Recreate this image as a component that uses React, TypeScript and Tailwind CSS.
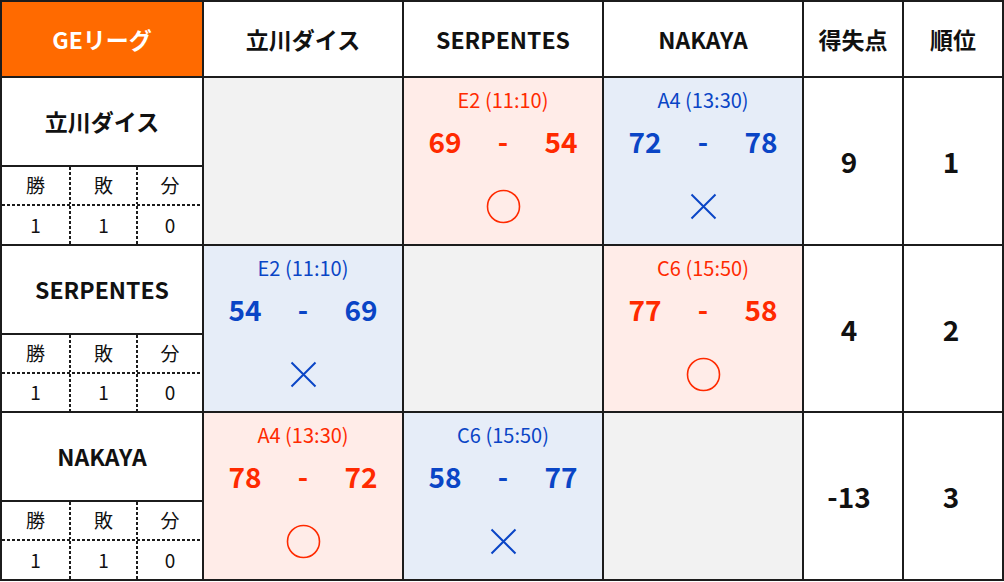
import React from "react";

type Match = { kind: "self" } | { kind: "game"; label: string; a: string; b: string; win: boolean };

const teams = ["立川ダイス", "SERPENTES", "NAKAYA"];

const rows: { name: string; h: string; matches: Match[]; diff: string; rank: string }[] = [
  {
    name: "立川ダイス",
    h: "h-[168px]",
    matches: [
      { kind: "self" },
      { kind: "game", label: "E2 (11:10)", a: "69", b: "54", win: true },
      { kind: "game", label: "A4 (13:30)", a: "72", b: "78", win: false },
    ],
    diff: "9",
    rank: "1",
  },
  {
    name: "SERPENTES",
    h: "h-[167px]",
    matches: [
      { kind: "game", label: "E2 (11:10)", a: "54", b: "69", win: false },
      { kind: "self" },
      { kind: "game", label: "C6 (15:50)", a: "77", b: "58", win: true },
    ],
    diff: "4",
    rank: "2",
  },
  {
    name: "NAKAYA",
    h: "h-[168px]",
    matches: [
      { kind: "game", label: "A4 (13:30)", a: "78", b: "72", win: true },
      { kind: "game", label: "C6 (15:50)", a: "58", b: "77", win: false },
      { kind: "self" },
    ],
    diff: "-13",
    rank: "3",
  },
];

const font = { fontFamily: '"Noto Sans CJK JP", "Noto Sans", sans-serif' };

function HDash() {
  return <div className="h-[2px] w-full bg-[repeating-linear-gradient(to_right,#1c1c1c_0_3px,transparent_3px_5px)]" />;
}

function VDash() {
  return <div className="w-[2px] h-full bg-[repeating-linear-gradient(to_bottom,#1c1c1c_0_3px,transparent_3px_5px)]" />;
}

function TeamCell({ name }: { name: string }) {
  return (
    <div className="w-[202px] h-full border-r-2 border-[#1c1c1c] flex flex-col">
      <div className="h-[89px] border-b-2 border-[#1c1c1c] flex items-center justify-center text-[23px] font-bold text-[#111]">
        {name}
      </div>
      <div className="h-[39px] flex flex-col">
        <div className="flex-1 flex">
          <div className="w-[67px] flex items-center justify-center text-[19px] text-[#111]">勝</div>
          <VDash />
          <div className="w-[65px] flex items-center justify-center text-[19px] text-[#111]">敗</div>
          <VDash />
          <div className="flex-1 flex items-center justify-center text-[19px] text-[#111]">分</div>
        </div>
        <HDash />
      </div>
      <div className="flex-1 flex">
        <div className="w-[67px] flex items-center justify-center text-[19px] text-[#111]">1</div>
        <VDash />
        <div className="w-[65px] flex items-center justify-center text-[19px] text-[#111]">1</div>
        <VDash />
        <div className="flex-1 flex items-center justify-center text-[19px] text-[#111]">0</div>
      </div>
    </div>
  );
}

function MatchCell({ m }: { m: Match }) {
  if (m.kind === "self") {
    return <div className="w-[200px] h-full border-r-2 border-[#1c1c1c] bg-[#f2f2f2]" />;
  }
  const color = m.win ? "text-[#ff2a00]" : "text-[#0a45c6]";
  const bg = m.win ? "bg-[#ffece8]" : "bg-[#e6edf8]";
  return (
    <div className={`w-[200px] h-full border-r-2 border-[#1c1c1c] ${bg} ${color} flex flex-col items-center`}>
      <div className="pt-[8px] text-[20px] leading-[28px]">{m.label}</div>
      <div className="mt-[10px] grid grid-cols-[58px_58px_58px] text-[28px] font-bold leading-[34px] text-center">
        <span>{m.a}</span>
        <span>-</span>
        <span>{m.b}</span>
      </div>
      <div className="mt-[31px]">
        {m.win ? (
          <svg width="35" height="35" viewBox="0 0 35 35">
            <circle cx="17.5" cy="17.5" r="16" fill="none" stroke="#ff2a00" strokeWidth="1.6" />
          </svg>
        ) : (
          <svg width="35" height="35" viewBox="0 0 35 35">
            <path d="M5.5 5.5 L29.5 29.5 M29.5 5.5 L5.5 29.5" stroke="#0a45c6" strokeWidth="2" fill="none" />
          </svg>
        )}
      </div>
    </div>
  );
}

export default function App() {
  return (
    <div className="w-[1004px] h-[582px] bg-white" style={font}>
      <div className="w-[1004px] border-l-2 border-t-2 border-[#1c1c1c] flex flex-col">
        <div className="h-[76px] border-b-2 border-[#1c1c1c] flex text-[23px] font-bold text-[#111]">
          <div className="w-[202px] border-r-2 border-[#1c1c1c] bg-[#ff6a00] text-white flex items-center justify-center">
            GEリーグ
          </div>
          {teams.map((t) => (
            <div key={t} className="w-[200px] border-r-2 border-[#1c1c1c] flex items-center justify-center">
              {t}
            </div>
          ))}
          <div className="w-[100px] border-r-2 border-[#1c1c1c] flex items-center justify-center">得失点</div>
          <div className="w-[100px] border-r-2 border-[#1c1c1c] flex items-center justify-center">順位</div>
        </div>
        {rows.map((r) => (
          <div key={r.name} className={`${r.h} border-b-2 border-[#1c1c1c] flex`}>
            <TeamCell name={r.name} />
            {r.matches.map((m, i) => (
              <MatchCell key={i} m={m} />
            ))}
            <div className="w-[100px] h-full border-r-2 border-[#1c1c1c] flex items-center justify-center pr-[8px] text-[28px] font-bold text-[#111]">
              {r.diff}
            </div>
            <div className="w-[100px] h-full border-r-2 border-[#1c1c1c] flex items-center justify-center pr-[4px] text-[28px] font-bold text-[#111]">
              {r.rank}
            </div>
          </div>
        ))}
      </div>
    </div>
  );
}
